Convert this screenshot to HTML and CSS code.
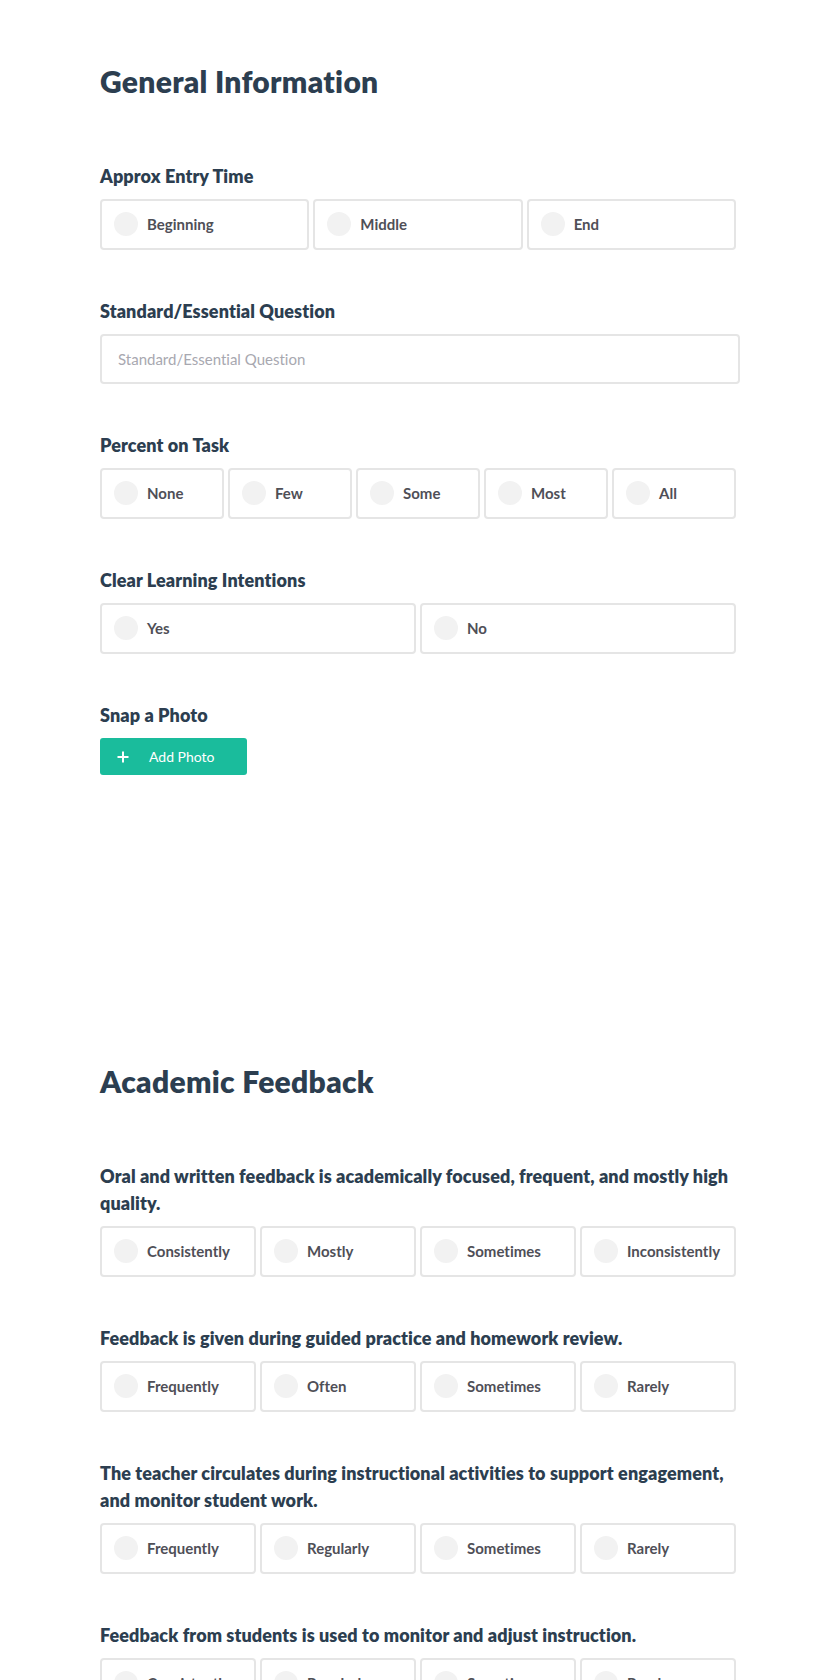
FILE: index.html
```html
<!DOCTYPE html>
<html lang="en">
<head>
	<meta charset="UTF-8">
	<title>Walkthrough</title>
	<link rel="stylesheet" href="styles.css">
</head>
<body>
	<div class="page">

		<!-- 基本信息 -->
		<section class="section">
			<h1 class="section-title">General Information</h1>

			<div class="field">
				<div class="field-label">Approx Entry Time</div>
				<div class="options">
					<label class="option"><input type="radio" name="entry"><span class="dot"></span>Beginning</label>
					<label class="option"><input type="radio" name="entry"><span class="dot"></span>Middle</label>
					<label class="option"><input type="radio" name="entry"><span class="dot"></span>End</label>
				</div>
			</div>

			<div class="field">
				<div class="field-label">Standard/Essential Question</div>
				<input class="text-input" type="text" placeholder="Standard/Essential Question">
			</div>

			<div class="field">
				<div class="field-label">Percent on Task</div>
				<div class="options">
					<label class="option"><input type="radio" name="task"><span class="dot"></span>None</label>
					<label class="option"><input type="radio" name="task"><span class="dot"></span>Few</label>
					<label class="option"><input type="radio" name="task"><span class="dot"></span>Some</label>
					<label class="option"><input type="radio" name="task"><span class="dot"></span>Most</label>
					<label class="option"><input type="radio" name="task"><span class="dot"></span>All</label>
				</div>
			</div>

			<div class="field">
				<div class="field-label">Clear Learning Intentions</div>
				<div class="options">
					<label class="option"><input type="radio" name="intent"><span class="dot"></span>Yes</label>
					<label class="option"><input type="radio" name="intent"><span class="dot"></span>No</label>
				</div>
			</div>

			<div class="field">
				<div class="field-label">Snap a Photo</div>
				<button class="photo-btn" type="button">
					<svg class="plus" width="12" height="12" viewBox="0 0 12 12">
						<path d="M6 0.5v11M0.5 6h11" stroke="#fff" stroke-width="2" fill="none"/>
					</svg>
					<span>Add Photo</span>
				</button>
			</div>
		</section>

		<!-- 学术反馈 -->
		<section class="section">
			<h1 class="section-title">Academic Feedback</h1>

			<div class="field">
				<div class="field-label">Oral and written feedback is academically focused, frequent, and mostly high quality.</div>
				<div class="options">
					<label class="option"><input type="radio" name="q1"><span class="dot"></span>Consistently</label>
					<label class="option"><input type="radio" name="q1"><span class="dot"></span>Mostly</label>
					<label class="option"><input type="radio" name="q1"><span class="dot"></span>Sometimes</label>
					<label class="option"><input type="radio" name="q1"><span class="dot"></span>Inconsistently</label>
				</div>
			</div>

			<div class="field">
				<div class="field-label">Feedback is given during guided practice and homework review.</div>
				<div class="options">
					<label class="option"><input type="radio" name="q2"><span class="dot"></span>Frequently</label>
					<label class="option"><input type="radio" name="q2"><span class="dot"></span>Often</label>
					<label class="option"><input type="radio" name="q2"><span class="dot"></span>Sometimes</label>
					<label class="option"><input type="radio" name="q2"><span class="dot"></span>Rarely</label>
				</div>
			</div>

			<div class="field">
				<div class="field-label">The teacher circulates during instructional activities to support engagement, and monitor student work.</div>
				<div class="options">
					<label class="option"><input type="radio" name="q3"><span class="dot"></span>Frequently</label>
					<label class="option"><input type="radio" name="q3"><span class="dot"></span>Regularly</label>
					<label class="option"><input type="radio" name="q3"><span class="dot"></span>Sometimes</label>
					<label class="option"><input type="radio" name="q3"><span class="dot"></span>Rarely</label>
				</div>
			</div>

			<div class="field">
				<div class="field-label">Feedback from students is used to monitor and adjust instruction.</div>
				<div class="options">
					<label class="option"><input type="radio" name="q4"><span class="dot"></span>Consistently</label>
					<label class="option"><input type="radio" name="q4"><span class="dot"></span>Regularly</label>
					<label class="option"><input type="radio" name="q4"><span class="dot"></span>Sometimes</label>
					<label class="option"><input type="radio" name="q4"><span class="dot"></span>Rarely</label>
				</div>
			</div>
		</section>

	</div>
</body>
</html>
```

FILE: styles.css
```css
* {
    margin: 0;
    padding: 0;
    box-sizing: border-box;
}
body {
    background-color: #fff;
    font-family: Lato, "Open Sans", sans-serif;
    font-variant-ligatures: none;
    color: #2c3e50;
}
.page {
    width: 640px;
    margin: 0 auto;
    padding-top: 63px;
}
/* 最后一个 field 的 margin 会和这里合并，所以直接写 288 */
.section {
    margin-bottom: 288px;
}
.section-title {
    font-size: 30px;
    line-height: 36px;
    font-weight: 800;
    letter-spacing: 0.3px;
    margin-bottom: 64px;
}
.field {
    margin-bottom: 48px;
}
.field-label {
    font-size: 18px;
    line-height: 27px;
    font-weight: 800;
    letter-spacing: 0.1px;
    margin-bottom: 9px;
}

/* 单选框一行，每个格子右边留4px */
.options {
    display: flex;
}
.option {
    flex: 1;
    display: flex;
    align-items: center;
    height: 51px;
    margin-right: 4px;
    padding: 0 12px 1px;
    border: 2px solid #e5e5e5;
    border-radius: 4px;
    font-size: 15px;
    font-weight: 700;
    color: #4f4f57;
    white-space: nowrap;
    overflow: hidden;
    cursor: pointer;
}
.option input {
    display: none;
}
.dot {
    flex: none;
    width: 24px;
    height: 24px;
    border-radius: 50%;
    background-color: #f2f2f2;
    margin-right: 9px;
}
.option input:checked + .dot {
    background-color: #1abc9c;
}

.text-input {
    display: block;
    width: 100%;
    height: 50px;
    padding: 0 16px;
    border: 2px solid #e5e5e5;
    border-radius: 4px;
    font-family: inherit;
    font-variant-ligatures: none;
    font-size: 15px;
    color: #4f4f57;
    outline: none;
}
.text-input::placeholder {
    color: #a8a8b0;
}

.photo-btn {
    display: flex;
    align-items: center;
    width: 147px;
    height: 37px;
    padding-left: 17px;
    border: none;
    border-radius: 3px;
    background-color: #1abc9c;
    color: #fff;
    font-family: inherit;
    font-size: 14px;
    cursor: pointer;
}
.plus {
    margin-right: 20px;
}
```
